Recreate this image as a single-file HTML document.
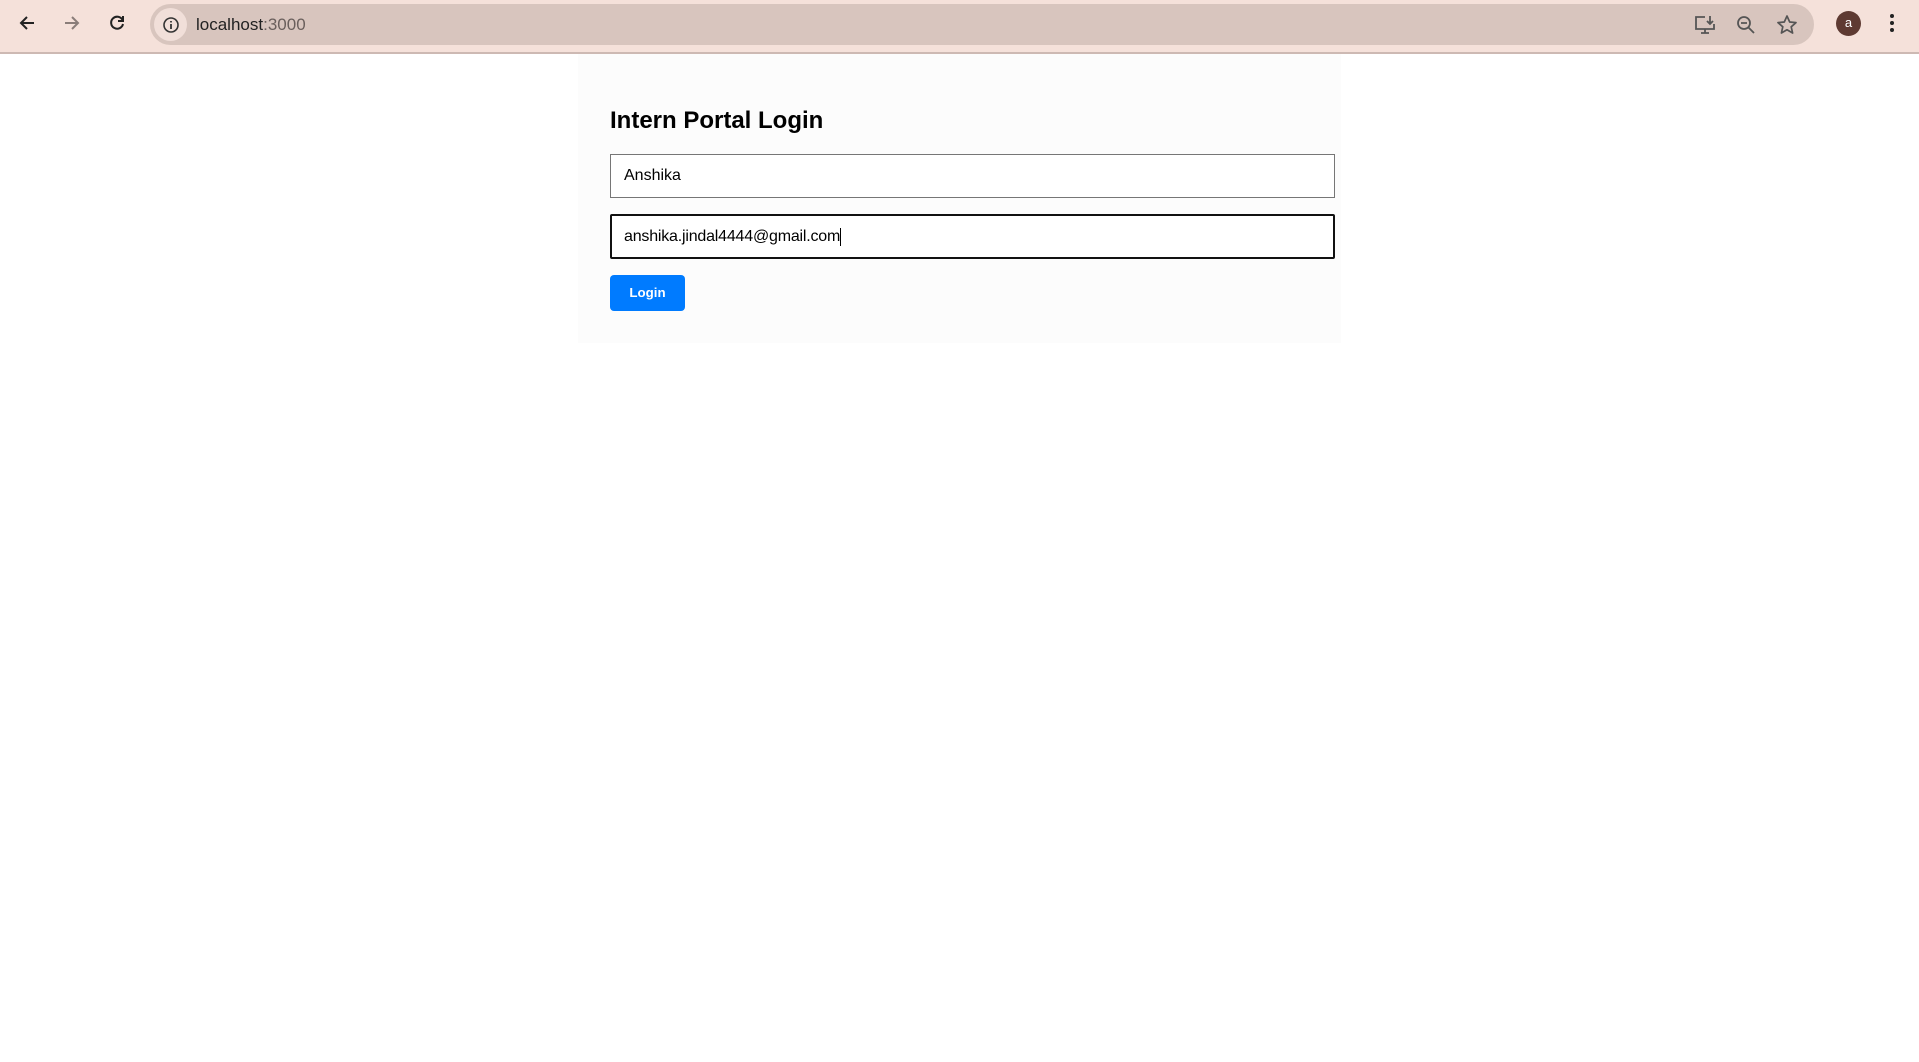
<!DOCTYPE html>
<html><head><style>
body{margin:0;width:1919px;height:1062px;background:#fff;font-family:"Liberation Sans",Arial,sans-serif;position:relative;overflow:hidden}
.tb{position:absolute;left:0;top:0;width:1919px;height:52px;background:#f5e1da;border-bottom:2px solid #cdb9b3}
.url{position:absolute;left:150px;top:4px;width:1664px;height:41px;border-radius:21px;background:#d8c5be}
.ic{position:absolute}
.card{position:absolute;left:578px;top:54px;width:763px;height:289px;background:#fcfcfc}
h2{position:absolute;left:32px;top:53px;margin:0;font-size:24px;font-weight:bold;color:#000;line-height:28px}
.in{position:absolute;left:32px;width:725px;box-sizing:border-box;background:#fff;font-size:16px;color:#000;padding-left:13px}
.btn{position:absolute;left:32px;top:221px;width:75px;height:36px;background:#007bff;border-radius:4px;color:#fff;font-weight:bold;font-size:13.3px;text-align:center;line-height:36px}
</style></head><body>
<div class="tb">
<svg class="ic" style="left:17px;top:13px" width="20" height="20" viewBox="0 0 20 20"><path d="M17 10H4M10 4L4 10l6 6" stroke="#222" stroke-width="2" fill="none"/></svg>
<svg class="ic" style="left:62px;top:13px" width="20" height="20" viewBox="0 0 20 20"><path d="M3 10h13M10 4l6 6-6 6" stroke="#8a7d79" stroke-width="2" fill="none"/></svg>
<svg class="ic" style="left:107px;top:13px" width="20" height="20" viewBox="0 0 20 20"><path d="M15.5 7A6 6 0 1 0 16 11" stroke="#222" stroke-width="2" fill="none"/><path d="M16 3v5h-5" stroke="#222" stroke-width="2" fill="none"/></svg>
<div class="url">
<div style="position:absolute;left:4px;top:4px;width:33px;height:33px;border-radius:50%;background:#f1dfd9"></div>
<svg class="ic" style="left:12px;top:12px" width="18" height="18" viewBox="0 0 18 18"><circle cx="9" cy="9" r="7" stroke="#333" stroke-width="1.6" fill="none"/><path d="M9 8v5M9 5v1.5" stroke="#333" stroke-width="1.8"/></svg>
<div style="position:absolute;left:46px;top:11px;font-size:17px;color:#222">localhost<span style="color:#6a5f5c">:3000</span></div>
<svg class="ic" style="left:1544px;top:10px" width="24" height="22" viewBox="0 0 24 22"><path d="M11 3H2v12h18v-5M7 19h8M11 15v4M16 2v8M13 7l3 3 3-3" stroke="#555" stroke-width="1.8" fill="none"/></svg>
<svg class="ic" style="left:1585px;top:10px" width="22" height="22" viewBox="0 0 22 22"><circle cx="9" cy="9" r="6" stroke="#555" stroke-width="1.8" fill="none"/><path d="M6 9h6M13.5 13.5L19 19" stroke="#555" stroke-width="1.8"/></svg>
<svg class="ic" style="left:1626px;top:10px" width="22" height="22" viewBox="0 0 22 22"><path d="M11 2l2.7 6 6.3.6-4.8 4.2 1.4 6.2L11 15.8 5.4 19l1.4-6.2L2 8.6 8.3 8z" stroke="#555" stroke-width="1.7" fill="none" stroke-linejoin="round"/></svg>
</div>
<div style="position:absolute;left:1836px;top:11px;width:25px;height:25px;border-radius:50%;background:#5e3a32;color:#fff;font-size:13px;text-align:center;line-height:24px">a</div>
<svg class="ic" style="left:1888px;top:13px" width="8" height="22" viewBox="0 0 8 22"><circle cx="4" cy="3" r="2" fill="#222"/><circle cx="4" cy="10" r="2" fill="#222"/><circle cx="4" cy="17" r="2" fill="#222"/></svg>
</div>
<div class="card">
<h2>Intern Portal Login</h2>
<div class="in" style="top:100px;height:44px;border:1px solid #767676;line-height:42px">Anshika</div>
<div class="in" style="top:160px;height:45px;border:2px solid #111;border-radius:2px;line-height:41px;padding-left:12px;letter-spacing:-0.2px">anshika.jindal4444@gmail.com<span style="display:inline-block;width:1px;height:18px;background:#000;vertical-align:middle"></span></div>
<div class="btn">Login</div>
</div>
</body></html>
